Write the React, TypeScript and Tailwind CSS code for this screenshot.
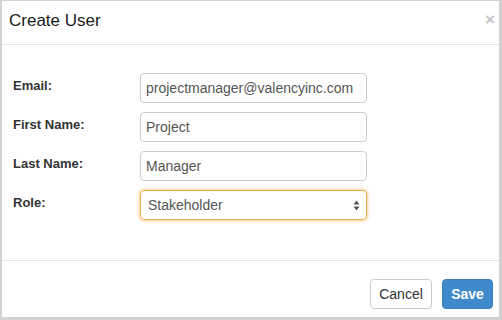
const fields = [
  { label: "Email:", value: "projectmanager@valencyinc.com" },
  { label: "First Name:", value: "Project" },
  { label: "Last Name:", value: "Manager" },
];

export default function App() {
  return (
    <div
      className="w-[502px] h-[320px] bg-white border-l-2 border-t border-r-[3px] border-b-[3px] border-[#d2d2d2] flex flex-col text-[#333]"
      style={{ fontFamily: '"Liberation Sans", Arial, sans-serif' }}
    >
      {/* Header */}
      <div className="h-[44px] flex items-start justify-between pl-[7px] pr-[4px] pt-[9px] border-b border-[#e5e5e5]">
        <h1 className="text-[17px] leading-[22px] font-normal text-[#1a1a1a]">Create User</h1>
        <span className="text-[#c4c4c4] text-[17px] leading-[17px] font-bold mt-[1px]">×</span>
      </div>

      {/* Body */}
      <div className="flex-1 pt-[28px] pl-[11px] flex flex-col gap-[9px]">
        {fields.map((f) => (
          <div key={f.label} className="flex items-start">
            <label className="w-[127px] pt-[4px] text-[13px] leading-[18px] font-bold text-[#333]">
              {f.label}
            </label>
            <div className="w-[227px] h-[30px] border border-[#cccccc] rounded-[4px] px-[5px] flex items-center text-[14px] text-[#555]">
              {f.value}
            </div>
          </div>
        ))}
        <div className="flex items-start">
          <label className="w-[127px] pt-[4px] text-[13px] leading-[18px] font-bold text-[#333]">Role:</label>
          <div className="w-[227px] h-[30px] border border-[#f0ad4e] rounded-[4px] pl-[7px] pr-[6px] flex items-center justify-between text-[14px] text-[#555] shadow-[0_0_3px_1px_rgba(240,173,78,0.55)]">
            <span>Stakeholder</span>
            <svg width="7" height="11" viewBox="0 0 7 11" fill="#555">
              <path d="M3.5 0.5 L6.5 4.5 L0.5 4.5 Z" />
              <path d="M3.5 10.5 L6.5 6.5 L0.5 6.5 Z" />
            </svg>
          </div>
        </div>
      </div>

      {/* Footer */}
      <div className="h-[57px] border-t border-[#e5e5e5] flex items-start justify-end gap-[10px] pt-[18px] pr-[6px]">
        <button className="w-[62px] h-[30px] border border-[#cccccc] rounded-[4px] bg-white text-[14px] text-[#333] flex items-center justify-center">
          Cancel
        </button>
        <button className="w-[51px] h-[30px] border border-[#3a7fbd] rounded-[4px] bg-[#4089cb] text-[14px] font-bold text-white flex items-center justify-center">
          Save
        </button>
      </div>
    </div>
  );
}
